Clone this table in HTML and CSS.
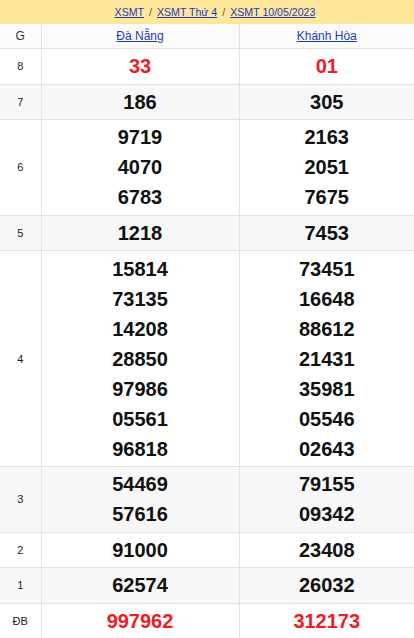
FILE: index.html
```html
<!DOCTYPE html>
<html lang="vi">
<head>
<meta charset="utf-8">
<link rel="stylesheet" href="styles.css">
</head>
<body>
<div class="crumbs">
  <a href="#">XSMT</a><span class="sep">/</span><a href="#">XSMT Thứ 4</a><span class="sep">/</span><a href="#">XSMT 10/05/2023</a>
</div>
<table class="kq">
  <colgroup><col class="c1"><col class="c2"><col class="c3"></colgroup>
  <thead>
    <tr><th class="lbl">G</th><th><a href="#">Đà Nẵng</a></th><th><a href="#">Khánh Hòa</a></th></tr>
  </thead>
  <tbody>
    <tr><td class="lbl">8</td><td class="red"><div>33</div></td><td class="red"><div>01</div></td></tr>
    <tr class="alt"><td class="lbl">7</td><td><div>186</div></td><td><div>305</div></td></tr>
    <tr><td class="lbl">6</td><td><div>9719</div><div>4070</div><div>6783</div></td><td><div>2163</div><div>2051</div><div>7675</div></td></tr>
    <tr class="alt"><td class="lbl">5</td><td><div>1218</div></td><td><div>7453</div></td></tr>
    <tr><td class="lbl">4</td><td><div>15814</div><div>73135</div><div>14208</div><div>28850</div><div>97986</div><div>05561</div><div>96818</div></td><td><div>73451</div><div>16648</div><div>88612</div><div>21431</div><div>35981</div><div>05546</div><div>02643</div></td></tr>
    <tr class="alt"><td class="lbl">3</td><td><div>54469</div><div>57616</div></td><td><div>79155</div><div>09342</div></td></tr>
    <tr><td class="lbl">2</td><td><div>91000</div></td><td><div>23408</div></td></tr>
    <tr class="alt"><td class="lbl">1</td><td><div>62574</div></td><td><div>26032</div></td></tr>
    <tr><td class="lbl">ĐB</td><td class="red"><div>997962</div></td><td class="red"><div>312173</div></td></tr>
  </tbody>
</table>
</body>
</html>
```
FILE: styles.css
```css
html, body {
  margin: 0;
  padding: 0;
  background: #fff;
  font-family: "Liberation Sans", Arial, sans-serif;
}
.crumbs {
  height: 24px;
  background: #fee79b;
  display: flex;
  align-items: center;
  justify-content: center;
  padding-left: 16px;
  font-size: 10.6px;
  color: #555;
}
.crumbs a {
  color: #1d3bbd;
  text-decoration: underline;
}
.crumbs .sep {
  margin: 0 5px;
  color: #555;
}
.kq {
  width: 100%;
  border-collapse: collapse;
  table-layout: fixed;
}
.kq .c1 { width: 41px; }
.kq .c2 { width: 198px; }
.kq th, .kq td {
  border: 1px solid #e2e2e2;
  text-align: center;
  vertical-align: middle;
  padding: 2.3px 0;
}
.kq tr > :first-child { border-left: none; }
.kq tr > :last-child { border-right: none; }
.kq thead tr > * { border-top: none; }
.kq thead th {
  height: 20px;
  padding: 2px 0;
  font-weight: normal;
  font-size: 12px;
  background: #fbfbfb;
}
.kq th a {
  color: #1d3bbd;
  text-decoration: underline;
}
.kq .lbl {
  font-size: 11px;
  color: #222;
}
.kq th.lbl { font-size: 12px; color: #333; }
.kq td div {
  font-size: 20px;
  font-weight: bold;
  line-height: 30px;
  color: #111;
}
.kq td.red div { color: #ee1c25; }
.kq tr.alt td { background: #f7f7f7; }
```
